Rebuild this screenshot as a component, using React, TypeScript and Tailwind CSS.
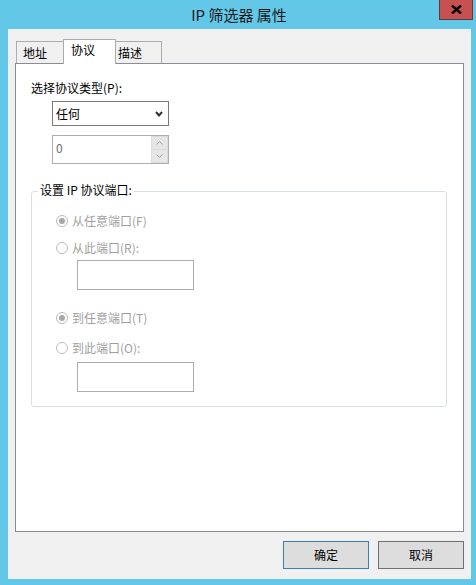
import React from "react";

const FONT = { fontFamily: '"Noto Sans CJK SC", "Noto Sans", sans-serif' };

function Radio({ checked, label }: { checked?: boolean; label: string }) {
  return (
    <div className="flex items-center h-[16px] pl-[24px]">
      <span className="w-[12px] h-[12px] rounded-full border border-[#bcbcbc] bg-white flex items-center justify-center">
        {checked && <span className="w-[6px] h-[6px] rounded-full bg-[#a8a8a8]" />}
      </span>
      <span className="ml-[4px] text-[12px] leading-[16px] text-[#a0a0a0]">{label}</span>
    </div>
  );
}

export default function App() {
  return (
    <div className="w-[476px] h-[585px] bg-[#63c8e8] flex flex-col" style={FONT}>
      <div className="h-[29px] relative flex items-center justify-center">
        <span className="text-[15px] leading-[20px] text-[#1a1a1a] ml-[2px]">IP 筛选器 属性</span>
        <div className="absolute right-[3px] top-0 w-[34px] h-[20px] bg-[#c75050] border border-[#5c3b3b] border-t-0 flex items-center justify-center">
          <svg width="11" height="9" viewBox="0 0 11 9">
            <path d="M1 0.5 L10 8.5 M10 0.5 L1 8.5" stroke="#000" strokeWidth="2.4" />
          </svg>
        </div>
      </div>
      <div className="flex-1 ml-[8px] mr-[5px] mb-[6px] bg-[#f0f0f0] flex flex-col px-[7px] pt-[10px]">
        <div className="h-[24px] flex items-end pl-[1px] text-[12px] leading-[16px] text-black">
          <div className="w-[47px] h-[22px] border-l border-t border-[#acacac] bg-[#f0f0f0] flex items-center pl-[6px]">地址</div>
          <div className="relative z-10 w-[53px] h-[25px] -mb-[1px] border-l border-t border-r border-[#acacac] bg-white pl-[7px] pt-[2px]">协议</div>
          <div className="w-[46px] h-[22px] border-t border-r border-[#acacac] bg-[#f0f0f0] flex items-center pl-[2px]">描述</div>
        </div>
        <div className="flex-1 border border-[#898c95] bg-white flex flex-col pl-[15px] pt-[16px]">
          <div className="text-[12px] leading-[16px] text-black">选择协议类型(P):</div>
          <div className="ml-[21px] mt-[5px] w-[117px] h-[25px] border border-[#7a7a7a] bg-white flex items-center justify-between pl-[3px] pr-[5px]">
            <span className="text-[12px] leading-[16px] text-black">任何</span>
            <svg width="8" height="6" viewBox="0 0 8 6">
              <path d="M1 1 L4 4.5 L7 1" stroke="#333" strokeWidth="2" fill="none" />
            </svg>
          </div>
          <div className="ml-[21px] mt-[9px] w-[117px] h-[29px] border border-[#adadad] bg-white flex">
            <span className="flex-1 pl-[3px] pt-[4px] text-[12px] leading-[16px] text-[#6d6d6d]">0</span>
            <div className="w-[17px] flex flex-col">
              <div className="h-[14px] bg-[#e6e6e6] border border-[#dcdcdc] flex items-center justify-center">
                <svg width="7" height="4" viewBox="0 0 7 4">
                  <path d="M0.5 3.5 L3.5 0.5 L6.5 3.5" stroke="#a0a0a0" strokeWidth="1" fill="none" />
                </svg>
              </div>
              <div className="flex-1 bg-[#e6e6e6] border border-t-0 border-[#dcdcdc] flex items-center justify-center">
                <svg width="7" height="4" viewBox="0 0 7 4">
                  <path d="M0.5 0.5 L3.5 3.5 L6.5 0.5" stroke="#a0a0a0" strokeWidth="1" fill="none" />
                </svg>
              </div>
            </div>
          </div>
          <div className="relative mt-[27px] w-[416px] h-[216px] border border-[#d5dfe5] rounded-[3px] flex flex-col pt-[21px]">
            <span className="absolute left-[6px] -top-[10px] px-[2px] bg-white text-[12px] leading-[16px] text-black">设置 IP 协议端口:</span>
            <Radio checked label="从任意端口(F)" />
            <div className="mt-[11px]">
              <Radio label="从此端口(R):" />
            </div>
            <div className="ml-[45px] mt-[4px] w-[117px] h-[30px] border border-[#adadad] bg-white" />
            <div className="mt-[20px]">
              <Radio checked label="到任意端口(T)" />
            </div>
            <div className="mt-[14px]">
              <Radio label="到此端口(O):" />
            </div>
            <div className="ml-[45px] mt-[6px] w-[117px] h-[30px] border border-[#adadad] bg-white" />
          </div>
        </div>
        <div className="flex justify-end gap-[9px] mt-[9px] mb-[10px]">
          <div className="w-[86px] h-[28px] border border-[#3c7fb1] bg-[#dddddd] flex items-center justify-center text-[12px] leading-[16px] text-black">确定</div>
          <div className="w-[86px] h-[28px] border border-[#707070] bg-[#dddddd] flex items-center justify-center text-[12px] leading-[16px] text-black">取消</div>
        </div>
      </div>
    </div>
  );
}
